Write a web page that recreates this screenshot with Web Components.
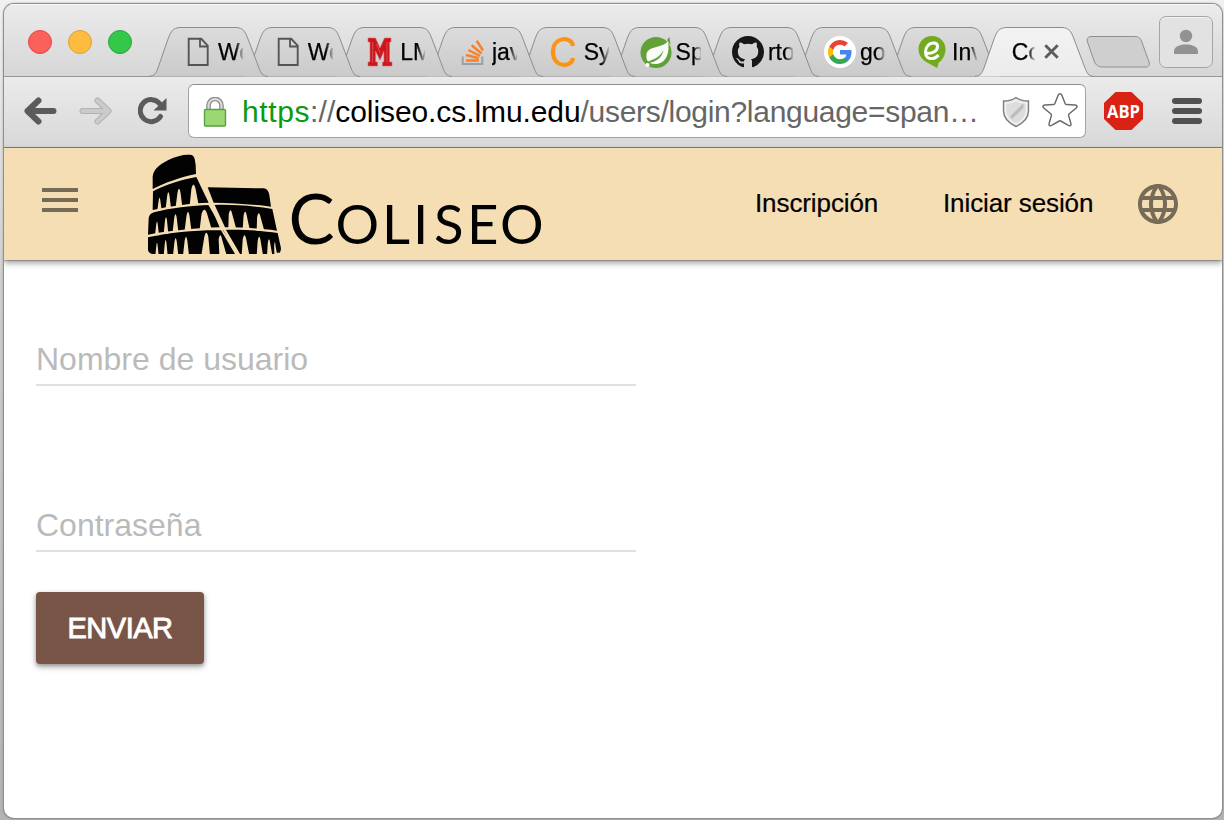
<!DOCTYPE html>
<html lang="es">
<head>
<meta charset="utf-8">
<title>Coliseo</title>
<style>
html,body{margin:0;height:820px;overflow:hidden}
body{font-family:"Liberation Sans",Arial,sans-serif;background:linear-gradient(#f1f1f1,#cfcfcf 35%,#b4b4b4)}
</style>
</head>
<body>
<browser-window>
  <tab-strip slot="tabs">
    <browser-tab label="We" icon="page" style="z-index:10;--pad:33px"></browser-tab>
    <browser-tab label="We" icon="page" style="z-index:9;--pad:31px"></browser-tab>
    <browser-tab label="LM" icon="lmu" style="z-index:8"></browser-tab>
    <browser-tab label="jav" icon="stack" style="z-index:7"></browser-tab>
    <browser-tab label="Sy" icon="cee" style="z-index:6"></browser-tab>
    <browser-tab label="Sp" icon="spring" style="z-index:5"></browser-tab>
    <browser-tab label="rto" icon="github" style="z-index:4;--pad:32px"></browser-tab>
    <browser-tab label="go" icon="google" style="z-index:3;--pad:32.400px"></browser-tab>
    <browser-tab label="Inv" icon="envato" style="z-index:2;--pad:32.500px"></browser-tab>
    <browser-tab label="Co" active style="z-index:20"></browser-tab>
  </tab-strip>
  <tool-bar slot="toolbar"></tool-bar>
  <app-header>
    <coliseo-logo slot="logo"></coliseo-logo>
    <nav-link style="width:123px;margin-right:65px">Inscripción</nav-link>
    <nav-link style="width:151px;margin-right:44px">Iniciar sesión</nav-link>
  </app-header>
  <login-form>
    <text-field>Nombre de usuario</text-field>
    <text-field>Contraseña</text-field>
    <raised-button>ENVIAR</raised-button>
  </login-form>
</browser-window>
<script>
const define = (name, html, setup) => customElements.define(name, class extends HTMLElement {
  constructor() {
    super();
    this.attachShadow({ mode: 'open' });
    const t = document.createElement('template');
    t.innerHTML = html;
    this.shadowRoot.append(t.content.cloneNode(true));
  }
  connectedCallback() { if (setup) setup(this, this.shadowRoot); }
});

const icons = {
  page: '<path d="M7 2.800h12.500l6.500 6.800v19.400h-19z" transform="translate(-.3 0)" fill="none" stroke="#555" stroke-width="1.900"/><path d="M18 3v7.500h8" fill="none" stroke="#555" stroke-width="1.800"/>',
  lmu: '<path d="M4 2h7.500l4.500 10 4.500-10H27v4h-1.500v20H28v4h-9.500v-4h1.500V15l-4 9-4.500-9v11h2v4H4v-4h2V6H4z" fill="#cd151c" stroke="#d6666a" stroke-width=".6"/><path d="M8.700 6v21M23 6v21M12.500 8l3.800 9" fill="none" stroke="#dd5257" stroke-width=".9"/>',
  stack: '<path d="M6.700 20.500V28h19.600v-7.500" fill="none" stroke="#9aa0a8" stroke-width="2"/><g stroke="#f6812c" stroke-width="2.500"><path d="M10 24.500h12.800"/><path d="M10 19l12.800 3.300"/><path d="M12.300 14L24 20"/><path d="M15.700 9.300l9.800 8.200"/><path d="M20.700 4.800L27 14.500"/></g>',
  cee: '<path d="M25 10C24 0 5 0 5 16s19 16 20 6" fill="none" stroke="#fb9317" stroke-width="4.200"/>',
  spring: '<circle cx="16" cy="16.500" r="15.500" fill="#61a137"/><path d="M27 4l2.500-3 1 8z" fill="#61a137"/><path d="M28 5.500C22 12 8 10 6.500 18c-.5 4 .3 6 1.500 7.500C14 23.500 20 21 23.500 14 22 22 16 25.500 9.500 27 20 31 31 24 28 5.500z" fill="#fbfcfa"/><circle cx="7.500" cy="29" r="2" fill="#fff"/>',
  github: '<path transform="scale(2)" fill="#181616" d="M8 0C3.580 0 0 3.580 0 8c0 3.540 2.290 6.530 5.470 7.590.4.070.55-.17.55-.38 0-.19-.01-.82-.01-1.490-2.010.37-2.530-.49-2.690-.94-.09-.23-.48-.94-.82-1.130-.28-.15-.68-.52-.01-.53.63-.01 1.080.58 1.230.82.72 1.210 1.870.87 2.330.66.07-.52.28-.87.51-1.070-1.780-.2-3.640-.89-3.640-3.950 0-.87.31-1.590.82-2.150-.08-.2-.36-1.020.08-2.120 0 0 .67-.21 2.200.82a7.600 7.600 0 0 1 4 0c1.530-1.040 2.200-.82 2.200-.82.44 1.100.16 1.920.08 2.120.51.56.82 1.270.82 2.150 0 3.070-1.870 3.750-3.650 3.950.29.25.54.73.54 1.480 0 1.070-.01 1.930-.01 2.200 0 .21.15.46.55.38A8 8 0 0 0 16 8c0-4.420-3.580-8-8-8z"/>',
  google: '<circle cx="16" cy="16" r="16" fill="#fff"/><g transform="translate(4 4)"><path fill="#4285f4" d="M23.500 12.300c0-.8-.1-1.600-.2-2.300H12v4.500h6.500a5.600 5.600 0 0 1-2.400 3.600v3h3.900c2.300-2.100 3.500-5.200 3.500-8.800z"/><path fill="#34a853" d="M12 24c3.200 0 6-1.100 8-2.900l-3.900-3c-1.100.7-2.500 1.200-4.100 1.200-3.100 0-5.800-2.100-6.700-5H1.300v3.100A12 12 0 0 0 12 24z"/><path fill="#fbbc05" d="M5.300 14.300a7 7 0 0 1 0-4.600V6.600h-4a12 12 0 0 0 0 10.800z"/><path fill="#ea4335" d="M12 4.800c1.800 0 3.300.6 4.600 1.800L20 3.100A12 12 0 0 0 1.300 6.600l4 3.100c.9-2.900 3.600-4.900 6.700-4.900z"/></g>',
  envato: '<path d="M16 0C8 0 2.500 6 2.500 13c0 6.500 4 11.500 10.500 14.500L21 32c1-1.500 1-3 1.500-5 4-3 7-8 7-14C29.500 6 24 0 16 0z" fill="#73ab1e"/><path d="M10.500 17c6 1.500 11-2.500 11-6.500 0-2.500-2-3.500-4-3.500-4.500 0-8 4-8 9s3 7 7 6.500c2.500-.3 4.500-1.500 6-3.500" fill="none" stroke="#fff" stroke-width="3"/>'
};

define('browser-window', `<style>
:host{display:flex;flex-direction:column;box-sizing:border-box;width:1218px;height:814px;margin:4px 0 0 4px;border-radius:10px;overflow:hidden;background:#fff;box-shadow:0 0 0 1px #8f8f8f,0 0 3px #666}
.page{flex:1;display:flex;flex-direction:column}
</style><slot name="tabs"></slot><slot name="toolbar"></slot><div class="page"><slot></slot></div>`);

define('tab-strip', `<style>
:host{display:flex;box-sizing:border-box;height:73px;background:linear-gradient(#ebebeb,#d6d6d6);box-shadow:inset 0 1px #f8f8f8,inset 0 -1px #969696;padding-left:35.500px;position:relative}
.lights{display:flex;gap:16px;width:109px;margin-left:-11.500px;align-self:flex-start;padding-top:26px}
.lights i{width:24px;height:24px;border-radius:50%;box-sizing:border-box;border:1px solid #e2463f;background:#fc605b;flex:none}
.lights i:nth-child(2){background:#fdbc40;border-color:#df9f34}.lights i:nth-child(3){background:#34c84a;border-color:#2ba13c}
.tabs{display:flex;align-items:flex-end;margin-left:12px;position:relative}
.new{width:66px;height:34px;margin:31px 0 0 18px}
.user{margin:12px 0 0 8px;width:54px;height:52px;box-sizing:border-box;border:1px solid #a5a5a5;border-radius:7px;background:#e2e2e2;box-shadow:inset 0 1px #f2f2f2;display:grid;place-items:center;flex:none}
svg{display:block;flex:none}
</style><div class="lights"><i></i><i></i><i></i></div><div class="tabs"><slot></slot></div>
<svg class="new" viewBox="0 0 66 34"><path d="M6 1.500h43c4 0 6 1 7.500 4.500l7.500 21c1 3-.5 5-3 5H18c-5 0-7-2-8.500-5L2.500 7C1.500 4 3 1.500 6 1.500z" fill="#cfcfcf" stroke="#8f8f8f"/></svg>
<div class="user"><svg width="26" height="26" viewBox="0 0 26 26" fill="#929292"><circle cx="13" cy="7" r="6.200"/><path d="M1 25v-2.500C1 17 8 15.500 13 15.500S25 17 25 22.500V25z"/></svg></div>`);

define('browser-tab', `<style>
:host{display:block;width:119px;height:50px;margin-right:-27.200px;position:relative;flex:none}
.row{display:flex;height:50px;box-sizing:border-box;padding-left:var(--pad,31.500px)}
.shape{position:absolute;inset:0}
.icon{width:32px;height:32px;margin-top:9px;flex:none;position:relative}
.label{position:relative;margin:11px 0 0 4px;width:25px;overflow:hidden;white-space:nowrap;font-size:23px;line-height:28px;color:#000;-webkit-text-stroke:.25px #000;-webkit-mask-image:linear-gradient(90deg,#000 70%,rgba(0,0,0,.15))}
:host([active]) .label{margin-left:5px;width:23px}
.close{position:relative;margin:17px 0 0 9.500px}
</style><svg class="shape" width="119" height="50" viewBox="0 0 119 50"><defs><linearGradient id="g" x2="0" y2="1"><stop stop-color="#dcdcdc"/><stop offset="1" stop-color="#cacaca"/></linearGradient><linearGradient id="a" x2="0" y2="1"><stop stop-color="#f3f3f3"/><stop offset="1" stop-color="#ebebeb"/></linearGradient></defs><path class="p" d="M-1 49.500C6 49 7 46 9 41L19 12C22 4 24 1 31 .5H87C94 1 96 4 99 12L110 41C112 46 113 49 119 49.500" fill="url(#g)" stroke="#8c8c8c"/></svg><div class="row"></div>`,
(el, root) => {
  const active = el.hasAttribute('active');
  const row = root.querySelector('.row');
  const ic = el.getAttribute('icon');
  row.innerHTML = (ic ? `<svg class="icon" viewBox="0 0 32 32">${icons[ic]}</svg>` : '') +
    `<span class="label">${el.getAttribute('label')}</span>` +
    (active ? '<svg class="close" width="15" height="15" viewBox="0 0 15 15"><path d="M1.300 1.300l12.400 12.400M13.700 1.300L1.300 13.700" stroke="#5c5c5c" stroke-width="2.900"/></svg>' : '');
  if (active) root.querySelector('.p').setAttribute('fill', 'url(#a)');
});

define('tool-bar', `<style>
:host{display:flex;box-sizing:border-box;height:71px;background:linear-gradient(#ebebeb,#d8d8d8);border-bottom:1px solid #777b80;align-items:center;padding:0 20px 3px 18.500px}
svg{display:block;flex:none}
.box{display:flex;align-items:center;box-sizing:border-box;width:898px;height:54px;border:1px solid #a3a3a3;border-top-color:#8e8e8e;border-radius:6px;background:#fff;margin:0 18px 0 21.500px;padding:2px 7px 0 14px;flex:none}
.url{width:740px;margin-left:15px;font-size:30px;letter-spacing:-.29px;white-space:nowrap;color:#666;flex:none;line-height:36px}
.g{color:#0a9b0e;letter-spacing:.6px}.s{letter-spacing:.1px}.h{color:#000;letter-spacing:-.09px}
.fwd{margin:0 25px 0 22px}
.menu{margin-left:29px}
</style>
<svg width="34" height="30" viewBox="0 0 34 30"><path d="M16 4.500L5 15l11 10.500M6 15h25" transform="translate(-.5 0)" fill="none" stroke="#5b5b5b" stroke-width="6" stroke-linecap="round" stroke-linejoin="round"/></svg>
<svg class="fwd" width="34" height="30" viewBox="0 0 34 30"><path d="M18.500 4.500L29.500 15l-11 10.500M28.500 15h-25" fill="none" stroke="#b2b2b2" stroke-width="6" stroke-linecap="round" stroke-linejoin="round"/><path d="M18.500 4.500L29.500 15l-11 10.500M28.500 15h-25" fill="none" stroke="#cbcbcb" stroke-width="4" stroke-linecap="round" stroke-linejoin="round"/></svg>
<svg width="29" height="30" viewBox="0 0 29 30"><path d="M22.500 20.500A11 11 0 1 1 22 8" fill="none" stroke="#5b5b5b" stroke-width="5" stroke-linecap="round"/><path d="M28.500 2v12.500H15.500z" fill="#5b5b5b"/></svg>
<div class="box">
<svg width="24" height="30" viewBox="0 0 24 30"><path d="M5.500 14V8.500a6.500 6.500 0 0 1 13 0V14" fill="none" stroke="#8b8b8b" stroke-width="4.600"/><path d="M5.500 14V8.500a6.500 6.500 0 0 1 13 0V14" fill="none" stroke="#ddd" stroke-width="2"/><rect x="1.500" y="12.500" width="21" height="16.500" rx="1" fill="#9bd873" stroke="#5aa143" stroke-width="1.400"/></svg>
<div class="url"><span class="g">https</span><span class="s">://</span><span class="h">coliseo.cs.lmu.edu</span>/users/login?language=span…</div>
<svg width="28" height="32" viewBox="0 0 28 32" style="margin-left:19.500px"><path d="M14 1.500c4 3 8 3.500 12.500 3.500v10c0 7-5 12-12.500 15.500C6.500 27 1.500 22 1.500 15V5C6 5 10 4.500 14 1.500z" fill="#ddd" stroke="#808080" stroke-width="1.400"/><path d="M14 4c3 2.500 7 3 10.500 3v8c0 6-4 10-10.500 13.300C8 25 3.500 21 3.500 15V7C7 7 11 6.500 14 4z" fill="none" stroke="#f6f6f6" stroke-width="1.300"/><path d="M8 20.500L21.500 7v5L10 23z" fill="#bdbdbd"/></svg>
<svg width="36" height="36" viewBox="0 0 36 36" style="margin:-3px 0 0 12.500px"><path d="M16 3.500q2-3.400 4 0l3.200 8.300q.3.700 1 .7l9 .6q3 .5 1 2.900l-7.200 6q-.6.600-.4 1.400l2.300 8.200q.3 3-2.500 1.800L18.700 29q-.7-.4-1.400 0l-7.700 4.400q-2.800 1.200-2.500-1.800l2.300-8.200q.2-.8-.4-1.400L1.800 16q-2-2.400 1-2.900l9-.6q.7 0 1-.7z" fill="#fff" stroke="#6b6b6b" stroke-width="1.500"/></svg>
</div>
<svg width="39" height="38" viewBox="0 0 39 38"><path d="M11.500 0h16L39 11v16L27.500 38h-16L0 27V11z" fill="#d92114"/><text x="3" y="26.300" textLength="33" lengthAdjust="spacingAndGlyphs" font-family="Open Sans,sans-serif" font-weight="700" font-size="18.500" fill="#fff">ABP</text></svg>
<svg class="menu" width="30" height="26" viewBox="0 0 30 26"><g fill="#515151"><rect width="30" height="6" rx="3"/><rect y="10" width="30" height="6" rx="3"/><rect y="20" width="30" height="6" rx="3"/></g></svg>`);

define('app-header', `<style>
:host{display:flex;align-items:center;box-sizing:border-box;height:112px;background:#f5ddb4;box-shadow:0 1px 1px rgba(0,0,0,.2),0 3px 6px rgba(0,0,0,.38);padding:0 44px 0 38px;flex:none}
.burger{margin:-8px 66px 0 0}
svg{display:block;flex:none}
.links{display:flex;align-items:center;margin-left:auto}
</style><svg class="burger" width="36" height="24" viewBox="0 0 36 24"><path d="M0 2h36M0 12h36M0 22h36" stroke="#766b57" stroke-width="4"/></svg><slot name="logo"></slot><div class="links"><slot></slot></div>
<svg width="40" height="40" viewBox="2 2 20 20"><path fill="#766b57" d="M11.990 2C6.470 2 2 6.480 2 12s4.470 10 9.990 10C17.520 22 22 17.520 22 12S17.520 2 11.990 2zm6.930 6h-2.950c-.32-1.250-.78-2.450-1.380-3.560 1.840.63 3.370 1.910 4.330 3.560zM12 4.040c.83 1.200 1.480 2.530 1.910 3.960h-3.820c.43-1.430 1.080-2.760 1.910-3.960zM4.260 14C4.100 13.360 4 12.690 4 12s.1-1.360.26-2h3.380c-.08.66-.14 1.320-.14 2 0 .68.06 1.340.14 2H4.260zm.82 2h2.950c.32 1.250.78 2.450 1.380 3.560-1.840-.63-3.370-1.900-4.330-3.560zm2.950-8H5.080c.96-1.660 2.490-2.930 4.330-3.560C8.810 5.550 8.350 6.750 8.030 8zM12 19.960c-.83-1.200-1.480-2.530-1.910-3.960h3.820c-.43 1.430-1.080 2.760-1.910 3.960zM14.340 14H9.660c-.09-.66-.16-1.320-.16-2 0-.68.07-1.350.16-2h4.680c.09.65.16 1.320.16 2 0 .68-.07 1.340-.16 2zm.25 5.560c.6-1.110 1.060-2.310 1.380-3.560h2.950c-.96 1.650-2.490 2.930-4.330 3.560zM16.360 14c.08-.66.14-1.320.14-2 0-.68-.06-1.340-.14-2h3.380c.16.64.26 1.310.26 2s-.1 1.360-.26 2h-3.380z"/></svg>`);

define('nav-link', `<style>:host{display:block;font-size:26px;color:#000;white-space:nowrap;line-height:32px;letter-spacing:-.1px;-webkit-text-stroke:.2px #000;margin-top:-2px}</style><slot></slot>`);

const arch = (l, r, top, bot, lean = 0) => {
  const w = (r - l) * .27;
  return `M${l} ${bot}L${l + w + lean} ${top + 12}Q${(l + r) / 2 + lean} ${top - 12} ${r - w + lean} ${top + 12}L${r} ${bot}Z`;
};
define('coliseo-logo', `<style>:host{display:block;width:404px;height:112px;flex:none}svg{display:block}</style>
<svg width="404" height="112" viewBox="144 148 404 112">
<g transform="translate(140 150) scale(.33333)">
<path d="M38 117V80C40 60 55 45 85 30C110 18 135 12 155 15C163 18 165 28 167 45L168 72C120 82 75 98 38 117ZM38 180L39 124C80 103 120 90 169 81L206 158C150 160 90 168 38 180ZM24 254L26 205C28 195 32 190 42 187C95 173 150 167 210 165L239 232C160 234 80 244 24 254ZM24 300V262C90 247 170 240 243 241L285 312H40C30 312 25 306 24 300ZM203 112L372 115C382 117 386 125 388 135L393 170C340 163 280 159 221 158ZM224 165C280 163 340 168 397 177L411 242C350 234 300 232 255 232ZM248 240C310 237 370 243 413 249L423 295C422 306 419 312 415 307L408 312H298Z" fill="#020202"/>
<path fill="#f5ddb4" d="${arch(52,65,143,181)}${arch(77,93,127,175)}${arch(107,127,116,170)}${arch(149,176,104,166,-2)}${arch(45,57,215,256)}${arch(71,85,202,251)}${arch(98,115,193,245)}${arch(134,154,186,240)}${arch(179,215,179,238,-4)}${arch(46,56,278,316)}${arch(71,83,270,316)}${arch(99,115,265,316)}${arch(129,147,261,316)}${arch(184,210,248,316,2)}${arch(238,260,256,316,-8)}${arch(265,288,181,234,-5)}${arch(308,329,185,238,-3)}${arch(350,373,190,242,-5)}${arch(305,328,256,316,-3)}${arch(350,369,260,316,-2)}${arch(381,397,268,316,-2)}${arch(403,412,276,316,-3)}"/>
<path d="M207 160L298 316" stroke="#f5ddb4" stroke-width="8" fill="none"/>
</g>
<g font-family="Lato,sans-serif" fill="#020202"><text font-size="69" y="243.500" x="288.500">C</text><text font-size="54.500" y="243.500" x="335.500 382 413 434 467 500">OLISEO</text></g></svg>`);

define('login-form', `<style>:host{display:flex;flex-direction:column;align-items:flex-start;padding:64px 32px 0}</style><slot></slot>`);
define('text-field', `<style>:host{display:block;box-sizing:border-box;width:600px;height:62px;border-bottom:2px solid #e0e0e0;margin-bottom:104px;padding-top:16px;font-size:32px;line-height:38px;color:#bababa}:host(:nth-of-type(2)){margin-bottom:40px}</style><slot></slot>`);
define('raised-button', `<style>:host{display:grid;place-items:center;width:168px;height:72px;border-radius:4px;background:#795548;color:#fff;font-size:29px;box-shadow:0 2px 4px rgba(0,0,0,.3),0 3px 7px rgba(0,0,0,.2)}span{-webkit-text-stroke:.9px #fff;letter-spacing:-.5px}</style><span><slot></slot></span>`);
</script>
</body>
</html>
